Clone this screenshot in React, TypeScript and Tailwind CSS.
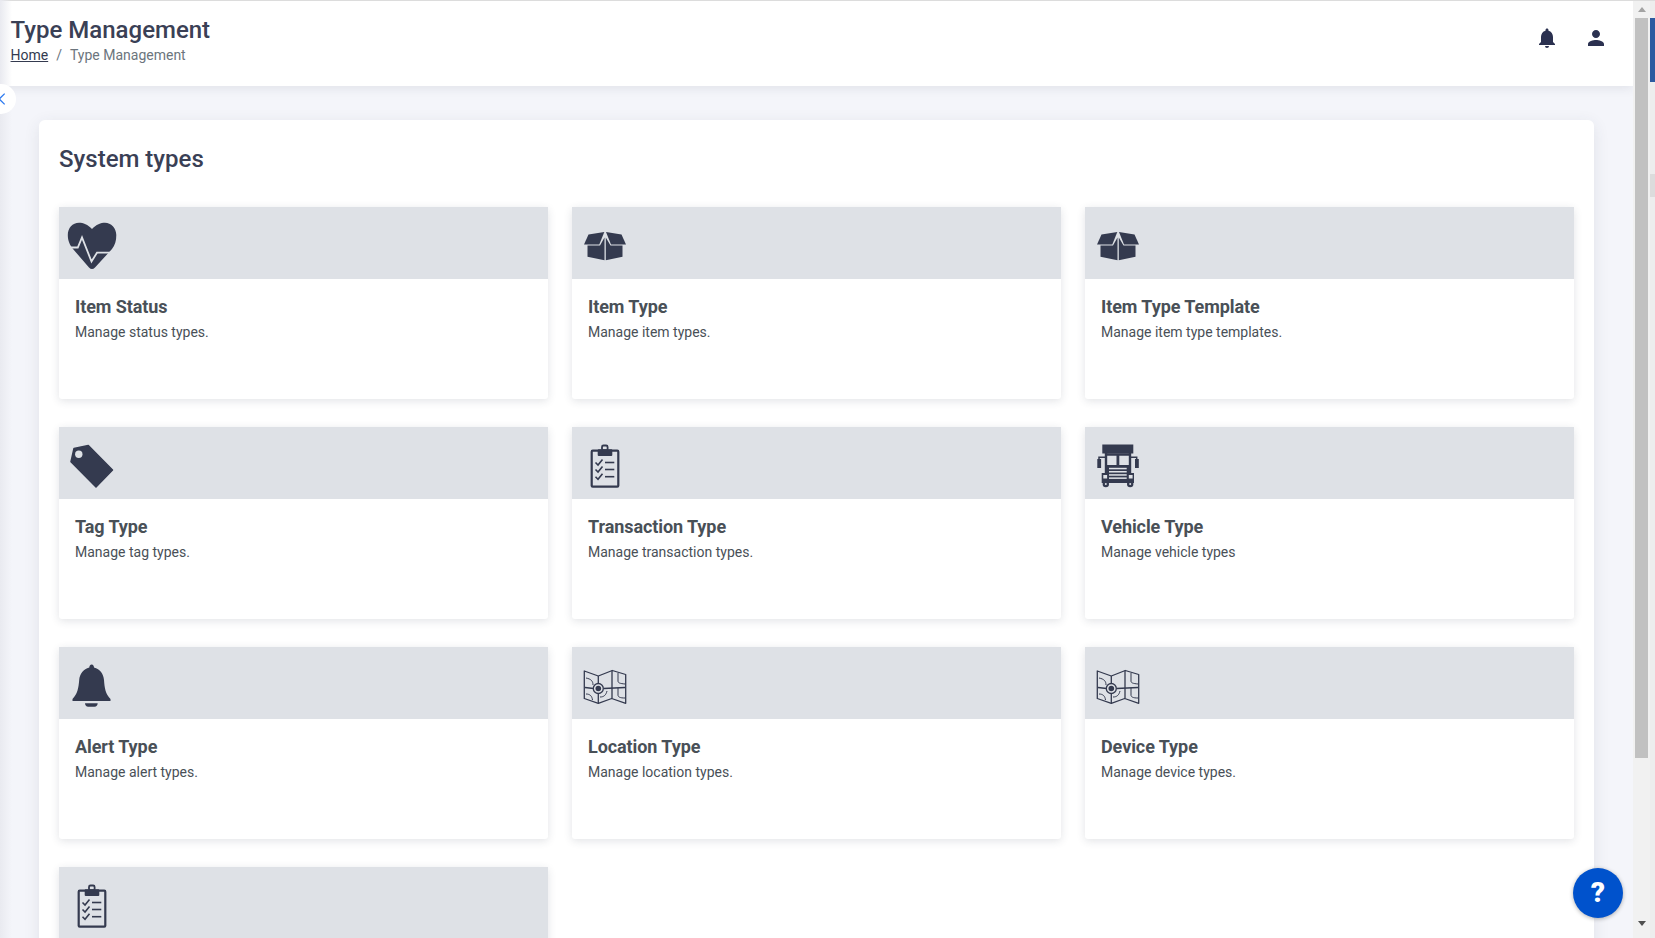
import type { ReactNode } from "react";
import { MdNotifications, MdPerson } from "react-icons/md";

const ink = "#343a4f";
const band = "#dee1e6";

function IconBox({ children }: { children: ReactNode }) {
  return (
    <svg viewBox="0 0 64 64" className="ml-[1px] h-16 w-16 shrink-0" fill="none">
      {children}
    </svg>
  );
}

function HeartIcon() {
  return (
    <IconBox>
      <path
        d="M32 15C28 10.500 23 8.700 19 8.700C12.500 8.700 7.800 14 7.800 21C7.800 27 10 31 13 35L29 53.500C31 55.500 33 55.500 35 53.500L52 35C55 31 56.300 27 56.300 21C56.300 14 51 8.700 45 8.700C41 8.700 36 10.500 32 15Z"
        fill={ink}
      />
      <path d="M11 33.500H17.800L22 23.500L31.500 47.500L37 38.700H50" stroke={band} strokeWidth="1.800" />
    </IconBox>
  );
}

function BoxIcon() {
  return (
    <IconBox>
      <path d="M11 30.500L15.500 20.500L31.300 18L26.300 30.500Z" fill={ink} />
      <path d="M53 30.500L48.500 20.500L33 18L38 30.500Z" fill={ink} />
      <path d="M14.500 31.400H27L31.500 23.500V46.300L14.500 42.700Z" fill={ink} />
      <path d="M49.500 31.400H37.500L32.800 23.500V46.300L49.500 42.700Z" fill={ink} />
    </IconBox>
  );
}

function TagIcon() {
  return (
    <IconBox>
      <path
        d="M14 14.500L28.300 11.500L52.500 36L36 53L11 27.700Z"
        fill={ink}
        stroke={ink}
        strokeWidth="1.500"
        strokeLinejoin="round"
      />
      <circle cx="18.800" cy="20.300" r="3.700" fill={band} />
    </IconBox>
  );
}

function ClipboardIcon() {
  return (
    <IconBox>
      <rect x="18.700" y="16.700" width="26.600" height="36" rx="1" stroke={ink} strokeWidth="2.200" />
      <rect x="24.700" y="15.300" width="14.600" height="6.600" rx="1" fill={ink} />
      <rect x="29" y="11.500" width="5.600" height="5" rx="1.500" stroke={ink} strokeWidth="1.800" />
      {[28.500, 35.500, 42.700].map((y) => (
        <g key={y} stroke={ink} strokeWidth="1.600">
          <path d={`M22.500 ${y}L25 ${y + 2.500}L29.500 ${y - 3}`} />
          <path d={`M32 ${y}H41.300`} />
        </g>
      ))}
    </IconBox>
  );
}

function TruckIcon() {
  return (
    <IconBox>
      <rect x="16.300" y="10.500" width="31" height="9" fill={ink} />
      <path d="M20 19V40M44 19V40M19.500 20.500H44.500" stroke={ink} strokeWidth="2.400" />
      <path d="M20 31H44V40H20Z" fill={ink} />
      <rect x="30.500" y="20" width="2.800" height="12" fill={ink} />
      <rect x="11.300" y="25" width="3.800" height="9" fill={ink} />
      <rect x="49" y="25" width="3.800" height="9" fill={ink} />
      <path d="M13 25V23.300H19.500M50.700 25V23.300H44.500" stroke={ink} strokeWidth="1.500" />
      <rect x="15.700" y="39" width="32.300" height="10" fill={ink} />
      <rect x="17.300" y="41" width="3.800" height="3.500" fill={band} />
      <rect x="42.800" y="41" width="3.800" height="3.500" fill={band} />
      {[33.800, 37, 40.200, 43.400].map((y) => (
        <rect key={y} x="23" y={y} width="17.700" height="1.500" fill={band} />
      ))}
      <circle cx="19.800" cy="50" r="3.200" fill={ink} />
      <circle cx="44.200" cy="50" r="3.200" fill={ink} />
      <circle cx="19.800" cy="50" r="1" fill={band} />
      <circle cx="44.200" cy="50" r="1" fill={band} />
    </IconBox>
  );
}

function MapIcon() {
  return (
    <IconBox>
      <path
        d="M11.300 17L25.300 22L39.300 16.500L52.700 20.500V49.300L38.700 44.500L25.300 49.300L11.300 44.500Z"
        stroke={ink}
        strokeWidth="1.300"
        strokeLinejoin="round"
      />
      <g stroke={ink} strokeWidth="1">
        <path d="M25.300 22V30M25.300 39.500V49.300M39 16.500V44.500" strokeWidth="1.300" />
        <path d="M12 33.500L20.500 34.500M30.500 34.500L52 33.500" strokeWidth="1.300" />
        <path d="M13 24C18 25 20 27 20 31M45 19V27C45 29 47 29.500 52 30" />
        <path d="M13 40C17 40 19 42 19.500 46M34 37C33 41 31 43 27 43M45 34V41C45 43 47 44 52 44" />
      </g>
      <circle cx="25.300" cy="34.500" r="5" stroke={ink} strokeWidth="1.300" />
      <circle cx="25.300" cy="34.500" r="2.800" fill={ink} />
    </IconBox>
  );
}

function BellIcon() {
  return (
    <IconBox>
      <path
        d="M31.700 10.500C33.200 10.500 34 12 34 13.600C40 15 43.500 20 44 26C44.600 34 45.500 40 50.500 45V47H12.500V45C17.500 40 18.500 34 19.200 26C19.700 20 23.500 15 29.300 13.600C29.300 12 30.200 10.500 31.700 10.500Z"
        fill={ink}
      />
      <path d="M25 49.300H37.700C37.500 51.500 36.500 52.700 34.500 52.700H28.200C26.200 52.700 25.200 51.500 25 49.300Z" fill={ink} />
    </IconBox>
  );
}

// last tile runs off the bottom of the window, only its band shows
const tiles: { id: string; title?: string; text?: string; icon: ReactNode }[] = [
  { id: "status", title: "Item Status", text: "Manage status types.", icon: <HeartIcon /> },
  { id: "item", title: "Item Type", text: "Manage item types.", icon: <BoxIcon /> },
  { id: "template", title: "Item Type Template", text: "Manage item type templates.", icon: <BoxIcon /> },
  { id: "tag", title: "Tag Type", text: "Manage tag types.", icon: <TagIcon /> },
  { id: "transaction", title: "Transaction Type", text: "Manage transaction types.", icon: <ClipboardIcon /> },
  { id: "vehicle", title: "Vehicle Type", text: "Manage vehicle types", icon: <TruckIcon /> },
  { id: "alert", title: "Alert Type", text: "Manage alert types.", icon: <BellIcon /> },
  { id: "location", title: "Location Type", text: "Manage location types.", icon: <MapIcon /> },
  { id: "device", title: "Device Type", text: "Manage device types.", icon: <MapIcon /> },
  { id: "last", icon: <ClipboardIcon /> },
];

function Tile({ title, text, icon }: { title?: string; text?: string; icon: ReactNode }) {
  return (
    <div className="h-[192px] rounded-[3px] bg-white shadow-[0_2px_8px_rgba(50,55,80,0.14)]">
      <div className="flex h-[72px] items-start bg-[#dee1e6] pt-[7px]">{icon}</div>
      {title && (
        <div className="px-4 pt-[16px]">
          <h3 className="text-[18px] leading-[24px] font-bold tracking-[-0.08px] text-[#495057]">{title}</h3>
          <p className="mt-[3px] text-[14px] leading-[21px] text-[#495057]">{text}</p>
        </div>
      )}
    </div>
  );
}

export default function App() {
  return (
    <div className="relative flex h-[938px] w-[1655px] overflow-hidden bg-[#f4f5fa] font-['Roboto',sans-serif]">
      <div className="flex min-w-0 flex-1 flex-col">
        {/* top bar */}
        <header className="z-10 mt-[1px] flex h-[85px] shrink-0 items-start justify-between bg-white pl-[10.500px] shadow-[0_2px_10px_rgba(50,55,80,0.10)]">
          <div className="pt-[13px]">
            <h1 className="text-[24px] leading-[32px] font-medium text-[#3a4055]">Type Management</h1>
            <div className="mt-[-1px] flex gap-2 text-[14px] leading-[21px] text-[#6c757d]">
              <a className="text-[#343a4f] underline">Home</a>
              <span>/</span>
              <span>Type Management</span>
            </div>
          </div>
          <div className="flex items-center gap-[25px] pt-[25px] pr-[25px] text-[#2b3150]">
            <MdNotifications size={24} />
            <MdPerson size={24} />
          </div>
        </header>

        <main className="min-h-0 flex-1 overflow-hidden pt-[34px] pr-[39px] pl-[39px]">
          <div className="rounded-[6px] bg-white px-5 pt-[24px] pb-10 shadow-[0_4px_16px_rgba(50,55,80,0.10)]">
            <h2 className="mb-[33px] text-[24px] leading-[30px] font-medium text-[#3a4055]">System types</h2>
            <div className="grid grid-cols-3 gap-x-[24px] gap-y-[28px]">
              {tiles.map((t) => (
                <Tile key={t.id} title={t.title} text={t.text} icon={t.icon} />
              ))}
            </div>
          </div>
        </main>
      </div>

      {/* page scrollbar */}
      <div className="z-10 flex w-[17px] shrink-0 flex-col items-center bg-[#f1f1f1]">
        <div className="flex h-[18px] items-center justify-center">
          <div className="h-0 w-0 border-x-[4px] border-b-[5px] border-x-transparent border-b-[#a3a3a3]" />
        </div>
        <div className="h-[740px] w-[13px] bg-[#c1c1c1]" />
        <div className="mt-auto flex h-[18px] items-start justify-center pt-[1px]">
          <div className="h-0 w-0 border-x-[4px] border-t-[5px] border-x-transparent border-t-[#505050]" />
        </div>
      </div>

      {/* edge of the outer window */}
      <div className="z-10 flex w-[5px] shrink-0 flex-col bg-[#ededed]">
        <div className="mt-[18px] h-[64px] bg-[#2c5aa0]" />
        <div className="mt-[92px] h-[23px] bg-[#dcdcdc]" />
      </div>

      {/* top hairline */}
      <div className="absolute top-0 left-0 z-20 h-[1px] w-full bg-[#dcdcdc]" />
      {/* shadow of the collapsed side menu */}
      <div className="absolute top-0 left-0 z-20 h-full w-[12px] bg-gradient-to-r from-[#e9eaf0] to-transparent" />

      {/* sidebar toggle */}
      <button className="absolute top-[84px] left-[-14px] z-30 flex h-[30px] w-[30px] items-center justify-center rounded-full bg-white">
        <svg viewBox="0 0 12 16" className="ml-[4px] h-[14px] w-[10px]" fill="none">
          <path d="M8 1.500L1.500 8L8 14.500" stroke="#2f7bf0" strokeWidth="1.500" />
        </svg>
      </button>

      {/* help button */}
      <button className="absolute top-[868px] left-[1573px] z-30 flex h-[50px] w-[50px] items-center justify-center rounded-full bg-[#0052cc] text-[28px] font-black text-white shadow-[0_1px_4px_rgba(0,0,0,0.3)]">
        ?
      </button>
    </div>
  );
}
